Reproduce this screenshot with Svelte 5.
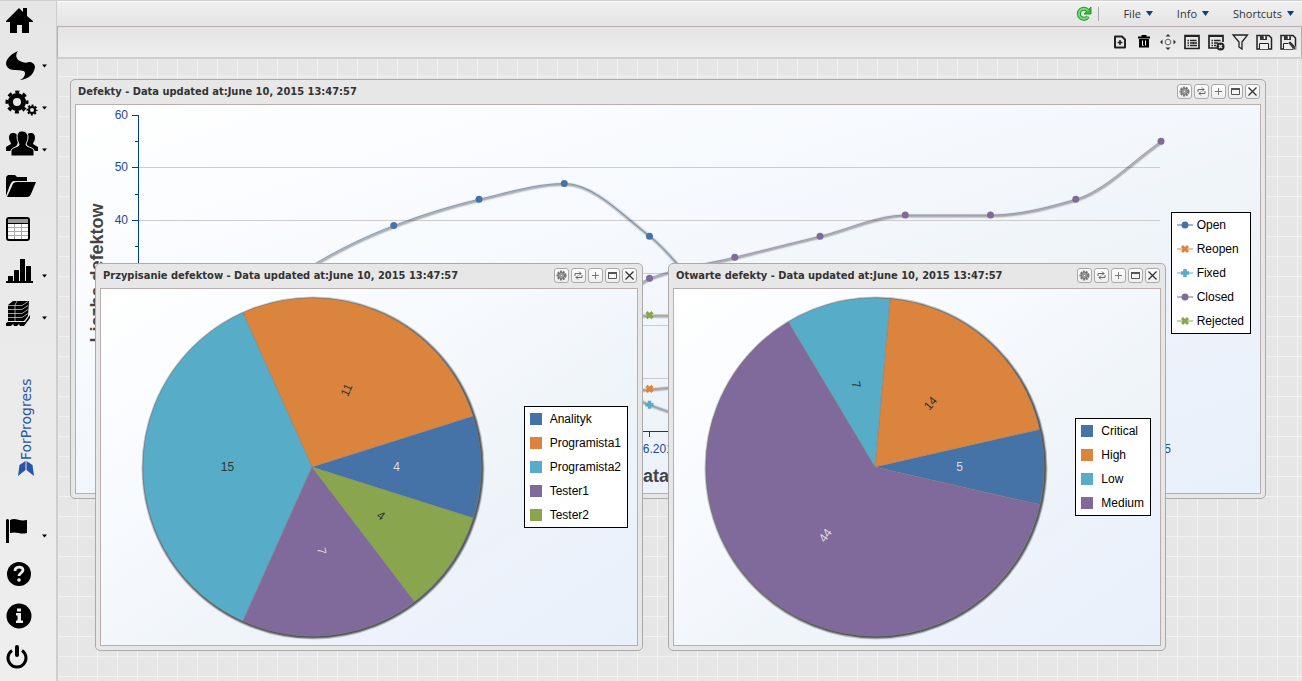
<script>
    const BLUE = "#4572a7";
    const ORANGE = "#db843d";
    const TEAL = "#57adc7";
    const PURPLE = "#80699b";
    const GREEN = "#89a54e";

    const menus = ["File", "Info", "Shortcuts"];
    const tools = ["New", "Delete", "Move", "Properties", "Remove properties", "Filter", "Save", "Save as"];
    const controls = ["Settings", "Refresh", "Add", "Maximize", "Close"];

    const topNav = [
        { id: "home", label: "Home" },
        { id: "sync", label: "Processes", more: true },
        { id: "gears", label: "Configuration", more: true },
        { id: "users", label: "Users", more: true },
        { id: "folder", label: "Projects" },
        { id: "table", label: "Tables" },
        { id: "chart", label: "Reports", more: true },
        { id: "stock", label: "Resources", more: true }
    ];
    const bottomNav = [
        { id: "flag", label: "Language", more: true },
        { id: "help", label: "Help" },
        { id: "info", label: "About" },
        { id: "power", label: "Log out" }
    ];

    const updated = "Data updated at:June 10, 2015 13:47:57";

    const windows = [
        {
            title: "Defekty", type: "line", x: 12, y: 22, w: 1196, h: 420,
            items: [
                { name: "Open", color: BLUE, marker: "dot", values: [4, 17, 31, 39, 44, 47, 37, 20, 12, 9, 6, 4, 3] },
                { name: "Reopen", color: ORANGE, marker: "x", values: [0, 1, 2, 3, 4, 6, 8, 9, 9, 8, 6, 5, 4] },
                { name: "Fixed", color: TEAL, marker: "plus", values: [0, 4, 8, 12, 16, 15, 5, 1, 1, 2, 3, 2, 1] },
                { name: "Closed", color: PURPLE, marker: "dot", values: [0, 1, 2, 4, 7, 14, 29, 33, 37, 41, 41, 44, 55] },
                { name: "Rejected", color: GREEN, marker: "x", values: [0, 4, 9, 14, 18, 22, 22, 22, 22, 22, 22, 22, 22] }
            ]
        },
        {
            title: "Przypisanie defektow", type: "pie", x: 37, y: 206, w: 548, h: 388,
            items: [
                { name: "Analityk", color: BLUE, value: 4 },
                { name: "Programista1", color: ORANGE, value: 11 },
                { name: "Programista2", color: TEAL, value: 15 },
                { name: "Tester1", color: PURPLE, value: 7 },
                { name: "Tester2", color: GREEN, value: 4 }
            ]
        },
        {
            title: "Otwarte defekty", type: "pie", x: 610, y: 206, w: 498, h: 388,
            items: [
                { name: "Critical", color: BLUE, value: 5 },
                { name: "High", color: ORANGE, value: 14 },
                { name: "Low", color: TEAL, value: 7 },
                { name: "Medium", color: PURPLE, value: 44 }
            ]
        }
    ];

    // line plot area, relative to the window body
    const plot = { left: 62, right: 1085, top: 10, bottom: 326, max: 60 };
    const px = (i) => plot.left + (i * (plot.right - plot.left)) / 12;
    const py = (v) => plot.bottom - (v * (plot.bottom - plot.top)) / plot.max;
    const crisp = (v) => Math.floor(py(v)) + 0.5;

    const slope = (v, i) => {
        if (i === 0) return v[1] - v[0];
        if (i === v.length - 1) return v[i] - v[i - 1];
        const a = v[i] - v[i - 1];
        const b = v[i + 1] - v[i];
        return a * b <= 0 ? 0 : (2 * a * b) / (a + b);
    };

    const curve = (v) => {
        let d = `M${px(0)},${py(v[0])}`;
        for (let i = 1; i < v.length; i++) {
            d += `C${px(i - 2 / 3)},${py(v[i - 1] + slope(v, i - 1) / 3)} ${px(i - 1 / 3)},${py(v[i] - slope(v, i) / 3)} ${px(i)},${py(v[i])}`;
        }
        return d;
    };

    const R = 169;

    // the first slice is centred on the positive x axis, the rest run counter-clockwise
    const slices = (items) => {
        const total = items.reduce((sum, item) => sum + item.value, 0);
        let from = (-items[0].value / total) * 180;
        return items.map((item) => {
            const to = from + (item.value / total) * 360;
            const mid = (from + to) / 2;
            const at = (deg, r) => [r * Math.cos((deg * Math.PI) / 180), -r * Math.sin((deg * Math.PI) / 180)];
            const flip = mid > 90.5 && mid < 270 ? 180 : 0;
            const slice = {
                ...item,
                d: `M0,0L${at(from, R)}A${R},${R} 0 ${to - from > 180 ? 1 : 0} 0 ${at(to, R)}Z`,
                label: `translate(${at(mid, R / 2)}) rotate(${flip - mid})`,
                ink: item.color === BLUE || item.color === PURPLE ? "#ddd" : "#333"
            };
            from = to;
            return slice;
        });
    };
</script>

{#snippet marker(kind, color)}
    {#if kind === "dot"}
        <circle r="3.5" fill={color} />
    {:else if kind === "x"}
        <path d="M-3,-3L3,3M-3,3L3,-3" stroke={color} stroke-width="3" />
    {:else}
        <path d="M-4,0H4M0,-4V4" stroke={color} stroke-width="3.5" />
    {/if}
{/snippet}

{#snippet navIcon(id)}
    {#if id === "home"}
        <path d="M6 21 19 8l4 4V8h4v8l6 5v1h-4v11h-7v-8h-5v8h-7V22H6z" />
    {:else if id === "sync"}
        <path d="M18 9C11 12 6 17 6 22c1 5 5 6 10 6 5 1 9 0 9 3 0 4-3 6-5 7 9-1 14-6 15-13 0-3-3-5-6-5-3 1-5 1-9-1-4-2-5-6-2-10z" />
    {:else if id === "gears"}
        <circle cx="17" cy="18" r="6.500" fill="none" stroke="#000" stroke-width="5" />
        <circle cx="17" cy="18" r="10" fill="none" stroke="#000" stroke-width="3" stroke-dasharray="4 3.850" stroke-dashoffset="2" />
        <circle cx="32" cy="26" r="3" fill="none" stroke="#000" stroke-width="2" />
        <circle cx="32" cy="26" r="4.500" fill="none" stroke="#000" stroke-width="2" stroke-dasharray="2 1.530" stroke-dashoffset="1" />
    {:else if id === "users"}
        <path d="M6 25v-4l5-3c0-2-2-3-2-6 0-4 2-5 4-5s5 1 5 5v4l-1 3-5 6z" />
        <path d="M38 25v-4l-5-3c0-2 2-3 2-6 0-4-2-5-4-5s-5 1-5 5v4l1 3 5 6z" />
        <path d="M11 30v-6c2-3 7-3 8-5 0-2-2-4-2-8 0-5 3-6 5-6s6 1 6 6c0 4-2 6-2 8 1 2 6 2 8 5v6z" stroke="#e9e9e9" stroke-width="1" />
    {:else if id === "folder"}
        <path d="M6 9l2-2h7l2 2h10v4H14c-2 0-3 2-4 4L6 28z" />
        <path d="M7 29l5-11c1-3 2-4 5-4h19l-5 12c-1 2-2 3-4 3z" />
    {:else if id === "table"}
        <rect x="7" y="8" width="22" height="22" rx="2" fill="#fff" stroke="#000" stroke-width="2" />
        <path d="M8 9h20v4H8z" fill="#999" />
        <path d="M8 17.500h20M8 21.500h20M8 25.500h20M14.500 14v15M21.500 14v15" stroke="#aaa" />
        <path d="M8 13.500h20" stroke="#000" />
    {:else if id === "chart"}
        <path d="M6 29h27v2H6zM8 24h5v5H8zM14 18h5v11h-5zM20 7h5v22h-5zM26 14h5v15h-5z" />
    {:else if id === "stock"}
        <path d="M8 11l5-4h16l-1 15-4 5H8z" />
        <path d="M6 29l2-1h17l5-7v3l-6 8h-4l-1-2-2 2h-3l-1-2-2 2H6z" />
        <path d="M8 11.500h14l6-4M8 15.500h14l6-4M8 19.500h14l6-4M8 23.500h14l6-4M17 7l-2 4v16" fill="none" stroke="#ddd" stroke-width=".7" />
    {:else if id === "flag"}
        <path d="M6 8q1.500-2 3 0v23H6zM10 8c6-3 9 2 17 0v13c-7 2-10-2-17 0z" />
    {:else if id === "help"}
        <circle cx="19" cy="20" r="12" />
        <path d="M15 17c0-5 8-5 8-1 0 3-4 3-4 6" fill="none" stroke="#eee" stroke-width="2.800" />
        <circle cx="19" cy="26" r="1.800" fill="#eee" />
    {:else if id === "info"}
        <circle cx="19" cy="20" r="12.500" />
        <path d="M17 12.500h4v3h-4zM16 17h5v7.500h2V27h-7v-2.500h1.500v-5H16z" fill="#eee" />
    {:else if id === "power"}
        <path d="M12 12.500a9 9 0 1 0 10 0" fill="none" stroke="#000" stroke-width="3" />
        <path d="M17 9v8" stroke="#000" stroke-width="4" stroke-linecap="round" />
    {/if}
{/snippet}

{#snippet nav(items)}
    {#each items as item}
        <button class="nav-button" aria-label={item.label}>
            <svg width="56" height="42">
                {@render navIcon(item.id)}
                {#if item.more}<path d="M42 22.500h5L44.500 25.500z" />{/if}
            </svg>
        </button>
    {/each}
{/snippet}

{#snippet toolIcon(i)}
    {#if i === 0}
        <path d="M4 3.500h7l3 3v8H4z" stroke-width="2" stroke-linejoin="round" />
        <path d="M9 7v5M6.500 9.500h5" stroke-width="1.600" />
    {:else if i === 1}
        <path d="M3 4.500h12M6.500 3h5" stroke="#000" stroke-width="2" />
        <path d="M4 6h10v8.500H4z" fill="#000" stroke="none" />
        <path d="M7.500 7.500v5h1M10.500 7.500v5" stroke="#fff" />
    {:else if i === 2}
        <circle cx="9" cy="9" r="2.800" stroke="#666" />
        <path d="M6.500 3.500 9 1l2.500 2.500zM6.500 14.500 9 17l2.500-2.500zM3.500 6.500 1 9l2.500 2.500zM14.500 6.500 17 9l-2.500 2.500z" fill="#333" stroke="none" />
    {:else if i === 3 || i === 4}
        <path d={i === 3 ? "M2 2.500h14v13H2z" : "M10 15H2V2.500h14V9"} stroke-width="1.700" />
        <path d="M2 3.500h14" />
        <path d="M4.500 7.500h1.500M7 7.500h6.500M4.500 10h1.500M7 10h4M4.500 12.500h1.500M7 12.500h2" stroke-width="1.400" />
        {#if i === 3}
            <path d="M10 10h4M9 12.500h5" stroke-width="1.400" />
        {:else}
            <circle cx="13.500" cy="13.500" r="4" fill="#222" stroke="none" />
            <path d="M12 12l3 3M15 12l-3 3" stroke="#eee" stroke-width="1.300" />
        {/if}
    {:else if i === 5}
        <path d="M2 2h14.500l-5.500 7v7l-3-2V9z" stroke-width="1.300" />
    {:else}
        <path d="M2 2.500h12l2.500 2.500v11H2z" stroke-width="1.500" />
        <path d="M5 2h7v5H5z" fill="#333" stroke="none" />
        <path d="M9.500 3v3" stroke="#eee" stroke-width="1.600" />
        <path d="M4.500 16v-5.500h9V16" fill="#eee" />
        {#if i === 7}
            <path d="M9 10l2-2 5 5 1 4-3-1z" fill="#333" stroke="#eee" stroke-width=".6" />
        {/if}
    {/if}
{/snippet}

<div class="app">
    <nav class="sidebar">
        {@render nav(topNav)}
        <svg class="logo" width="56" height="104">
            <text transform="translate(31 87) rotate(-90)">ForProgress</text>
            <path d="M26.500 88l6 4 1.500 11-7.500-6zM25.500 88l-6 4-1.500 11 7.500-6z" />
        </svg>
        {@render nav(bottomNav)}
    </nav>

    <div class="main">
        <header class="menubar">
            <button class="reload" aria-label="Reload">
                <svg width="16" height="16" fill="none">
                    <path d="M12 10.500a5 5 0 1 1 0-5.500" stroke="#239b2c" stroke-width="4" />
                    <path d="M8 8h7V1z" fill="#39b53f" stroke="#239b2c" />
                    <path d="M12 10.500a5 5 0 1 1 0-5.500" stroke="#7bdc76" stroke-width="2" />
                </svg>
            </button>
            {#each menus as menu}
                <button class="menu">{menu}<svg width="7" height="5"><path d="M0 0h7L3.500 5z" /></svg></button>
            {/each}
        </header>

        <div class="toolbar">
            {#each tools as tool, i}
                <button aria-label={tool}>
                    <svg width="18" height="18" fill="none" stroke="#222">{@render toolIcon(i)}</svg>
                </button>
            {/each}
        </div>

        <main class="desktop">
            {#each windows as win}
                <section class="window" style="left: {win.x}px; top: {win.y}px; width: {win.w}px; height: {win.h}px">
                    <div class="titlebar">
                        <h2>{win.title} - {updated}</h2>
                        {#each controls as control, i}
                            <button aria-label={control}>
                                <svg width="13" height="13" fill="none" stroke="#555">
                                    {#if i === 0}
                                        <circle cx="6.500" cy="6.500" r="4" stroke="#777" stroke-width="2" stroke-dasharray="2 .8" />
                                        <circle cx="6.500" cy="6.500" r="3" fill="#aaa" stroke="#666" />
                                        <circle cx="6.500" cy="6.500" r="1" fill="#eee" stroke="#666" stroke-width=".5" />
                                    {:else if i === 1}
                                        <path d="M3 7V4.500h6M7 2.500l2 2-2 2M10 6v2.500H4M6 6.500l-2 2 2 2" stroke="#666" />
                                    {:else if i === 2}
                                        <path d="M6.500 3v7M3 6.500h7" stroke="#777" />
                                    {:else if i === 3}
                                        <path d="M2.500 3.500h8v6h-8z" /><path d="M2 4h9" stroke-width="2" />
                                    {:else}
                                        <path d="M2.500 2.500l8 8M10.500 2.500l-8 8" stroke="#333" stroke-width="1.300" />
                                    {/if}
                                </svg>
                            </button>
                        {/each}
                    </div>

                    <div class="body {win.type}">
                        {#if win.type === "line"}
                            <svg class="plot">
                                {#each [10, 20, 30, 40, 50] as v}
                                    <path d="M{plot.left},{crisp(v)}H{plot.right - 1}" stroke="#ccc" />
                                {/each}
                                <g class="axis">
                                    <path d="M{plot.left + 0.5},{plot.top}V{plot.bottom + 0.5}H{plot.right}" />
                                    {#each Array(13) as _, i}
                                        <path d="M{plot.left},{crisp(i * 5)}h{i % 2 ? -3 : -6}" />
                                        <path d="M{Math.floor(px(i)) + 0.5},{plot.bottom}v6" />
                                    {/each}
                                </g>
                                {#each [0, 10, 20, 30, 40, 50, 60] as v}
                                    <text class="tick" x="52" y={crisp(v) + 3} text-anchor="end">{v}</text>
                                {/each}
                                <text class="tick" x={px(6)} y="348" text-anchor="middle">04.06.2015</text>
                                <text class="tick" x="1095" y="348" text-anchor="end">10.06.2015</text>
                                <text class="axis-title" transform="translate(27 168) rotate(-90)">Liczba defektow</text>
                                <text class="axis-title" x={px(6)} y="377">Data</text>
                                {#each win.items as item}
                                    <g fill="none">
                                        <g stroke="#000" transform="translate(1 1)">
                                            <path d={curve(item.values)} stroke-width="5" opacity=".06" />
                                            <path d={curve(item.values)} stroke-width="3" opacity=".18" />
                                            <path d={curve(item.values)} stroke-width="1" opacity=".12" />
                                        </g>
                                        <path d={curve(item.values)} stroke={item.color} opacity=".5" />
                                    </g>
                                    {#each item.values as v, i}
                                        <g transform="translate({px(i)} {py(v)})">{@render marker(item.marker, item.color)}</g>
                                    {/each}
                                {/each}
                            </svg>
                        {:else}
                            <div class="pie-area">
                                <svg width="346" height="346" viewBox="-173 -173 346 346">
                                    <g fill="none" stroke="#000" transform="translate(1 1)">
                                        <circle r={R} stroke-width="5" opacity=".2" />
                                        <circle r={R} stroke-width="3" opacity=".4" />
                                        <circle r={R} stroke-width="1" opacity=".3" />
                                    </g>
                                    {#each slices(win.items) as slice}
                                        <path d={slice.d} fill={slice.color} stroke="#777" stroke-opacity=".4" />
                                    {/each}
                                    {#each slices(win.items) as slice}
                                        <text class="value" transform={slice.label} y="4" fill={slice.ink}>{slice.value}</text>
                                    {/each}
                                </svg>
                            </div>
                        {/if}

                        <ul class="legend">
                            {#each win.items as item}
                                <li>
                                    {#if item.marker}
                                        <svg width="16" height="12" viewBox="-8 -6 16 12">
                                            <path d="M-8,0H8" stroke={item.color} />
                                            {@render marker(item.marker, item.color)}
                                        </svg>
                                    {:else}
                                        <span class="swatch" style="background: {item.color}"></span>
                                    {/if}
                                    {item.name}
                                </li>
                            {/each}
                        </ul>
                    </div>
                </section>
            {/each}
        </main>
    </div>
</div>

<style>
    :global(body) {
        margin: 0;
        overflow: hidden;
    }
    .app {
        display: flex;
        min-height: 100vh;
        font-family: "Open Sans", "Noto Sans", sans-serif;
        font-size: 11px;
        color: #333;
        background: #e6e6e6;
    }
    button {
        appearance: none;
        display: flex;
        align-items: center;
        justify-content: center;
        flex: none;
        border: none;
        padding: 0;
        margin: 0;
        background: transparent;
        font: inherit;
        color: inherit;
        cursor: pointer;
    }
    svg {
        display: block;
        flex: none;
    }
    .sidebar {
        box-sizing: border-box;
        display: flex;
        flex-direction: column;
        flex: none;
        width: 58px;
        border-top: 1px solid #d0d0d0;
        border-right: 2px solid #cecece;
        background: linear-gradient(#e6e6e6, #eee);
        margin-right: -1px;
    }
    .nav-button {
        height: 42px;
        margin-top: -1px;
        margin-bottom: 1px;
    }
    .logo {
        margin: auto 0;
        fill: #2a55a5;
    }
    .logo text {
        font-family: "DejaVu Sans", sans-serif;
        font-size: 14px;
    }
    .main {
        display: flex;
        flex-direction: column;
        flex: 1;
        min-width: 0;
    }
    .menubar {
        box-sizing: border-box;
        display: flex;
        align-items: center;
        justify-content: flex-end;
        height: 26px;
        padding-right: 8px;
        border-top: 1px solid #d0d0d0;
        box-shadow: inset 0 1px #fafafa;
        background: linear-gradient(#f0f0f0, #e4e4e4);
    }
    .reload {
        padding-right: 6px;
        border-right: 1px solid #aaa;
        height: 14px;
    }
    .menu {
        gap: 5px;
        margin-left: 24px;
    }
    .menu svg {
        fill: #0a3f86;
    }
    .toolbar {
        box-sizing: border-box;
        display: flex;
        align-items: center;
        justify-content: flex-end;
        gap: 6px;
        height: 33px;
        padding-right: 4px;
        border: 1px solid #b9adb0;
        border-bottom: 2px solid #cecece;
        background: linear-gradient(#e4e4e4, #eee);
    }
    .desktop {
        position: relative;
        flex: 1;
        margin-top: -2px;
        margin-left: 1px;
        border-top: 2px solid #cecece;
        background-color: #e6e6e6;
        background-image:
            linear-gradient(90deg, transparent 19px, #f2f2f2 19px),
            linear-gradient(transparent 19px, #f2f2f2 19px);
        background-size: 20px 20px;
        background-position: 0 -2px;
    }
    .window {
        position: absolute;
        box-sizing: border-box;
        display: flex;
        flex-direction: column;
        padding: 0 4px 4px;
        border: 1px solid #aaa;
        border-radius: 5px;
        background: #e7e7e7;
        margin-top: -2px;
    }
    .titlebar {
        box-sizing: border-box;
        display: flex;
        align-items: center;
        gap: 2px;
        height: 24px;
        flex: none;
        padding: 0 1px 2px 3px;
    }
    h2 {
        flex: 1;
        margin: 0;
        font-family: "DejaVu Sans Condensed", "DejaVu Sans", sans-serif;
        font-size: 11px;
        font-weight: bold;
        white-space: nowrap;
    }
    .titlebar button {
        box-sizing: border-box;
        width: 15px;
        height: 15px;
        border: 1px solid #aaa;
        border-radius: 3px;
        background: linear-gradient(#fff, #eee);
    }
    .body {
        display: flex;
        align-items: center;
        flex: 1;
        min-height: 0;
        padding-right: 9px;
        border: 1px solid #b9adad;
        background: linear-gradient(to bottom right, #fff 0%, #f4f8fd 45%, #eff4f8 62%, #edf2fb 75%, #e8f0fa 100%);
        font-family: "Liberation Sans", Arial, sans-serif;
        font-size: 12px;
        color: #000;
    }
    .plot {
        flex: 1;
        align-self: stretch;
        height: auto;
        min-width: 0;
        overflow: visible;
    }
    .axis {
        fill: none;
        stroke: #003f8f;
    }
    .tick {
        fill: #1b4a94;
    }
    .axis-title {
        font-size: 18px;
        font-weight: bold;
        text-anchor: middle;
        fill: #444;
    }
    .pie-area {
        display: flex;
        flex: 1;
        justify-content: center;
    }
    .value {
        text-anchor: middle;
    }
    .legend {
        position: relative;
        list-style-type: none;
        margin: 0;
        padding: 0 6px 0 5px;
        border: 1px solid #000;
        background: #fff;
    }
    .line .legend {
        margin-bottom: 52px;
    }
    .legend li {
        display: flex;
        align-items: center;
        gap: 8px;
        height: 24px;
    }
    .line .legend li {
        gap: 4px;
    }
    .swatch {
        width: 12px;
        height: 12px;
    }
</style>
